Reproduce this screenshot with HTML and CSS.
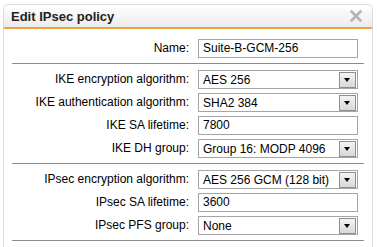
FILE: index.html
```html
<!DOCTYPE html>
<html lang="en">
  <head>
    <meta charset="UTF-8" />
    <title>Edit IPsec policy</title>
    <link rel="stylesheet" href="styles.css">
  </head>
  <body>
    <div class="dialog">
      <div class="header">
        <span class="title">Edit IPsec policy</span>
        <svg class="close" width="12" height="12" viewBox="0 0 12 12">
          <path d="M1.5 1.5 L10.5 10.5 M10.5 1.5 L1.5 10.5" stroke="#b4b4b4" stroke-width="2.6" stroke-linecap="round" />
        </svg>
      </div>

      <div class="body">
        <!-- name -->
        <div class="group">
          <label class="label">Name:</label>
          <div class="field">Suite-B-GCM-256</div>
        </div>

        <!-- IKE -->
        <div class="group">
          <label class="label">IKE encryption algorithm:</label>
          <div class="select"><span>AES 256</span><i class="btn"></i></div>

          <label class="label">IKE authentication algorithm:</label>
          <div class="select"><span>SHA2 384</span><i class="btn"></i></div>

          <label class="label">IKE SA lifetime:</label>
          <div class="field">7800</div>

          <label class="label">IKE DH group:</label>
          <div class="select"><span>Group 16: MODP 4096</span><i class="btn"></i></div>
        </div>

        <!-- IPsec -->
        <div class="group">
          <label class="label">IPsec encryption algorithm:</label>
          <div class="select"><span>AES 256 GCM (128 bit)</span><i class="btn"></i></div>

          <label class="label">IPsec SA lifetime:</label>
          <div class="field">3600</div>

          <label class="label">IPsec PFS group:</label>
          <div class="select"><span>None</span><i class="btn"></i></div>
        </div>
      </div>
    </div>
  </body>
</html>
```

FILE: styles.css
```css
body {
  margin: 0;
  background-color: #fff;
  font-family: "Liberation Sans", Arial, sans-serif;
  font-size: 12px;
  color: #000;
}
.dialog {
  margin: 4px 4px 0 3px;
  height: 243px;
  border: 1px solid #dcdcdc;
  border-bottom: none;
  border-radius: 5px 5px 0 0;
  background-color: #fff;
}
.header {
  height: 22px;
  display: flex;
  align-items: center;
  justify-content: space-between;
  padding: 0 10px 0 7px;
  background: linear-gradient(#ffffff, #ececec);
  border-bottom: 2px solid #f0a33c;
  border-radius: 5px 5px 0 0;
}
.title {
  font-size: 13px;
  font-weight: bold;
  color: #222;
}
.close {
  display: block;
}

.body {
  padding: 5px 8px 0 8px;
}
.group {
  display: grid;
  grid-template-columns: 177px 160px;
  column-gap: 9px;
  row-gap: 4px;
  padding: 5px 0 5px 0;
  border-bottom: 1px solid #8c8c8c;
}
.group + .group {
  padding-top: 6px;
}
.label {
  text-align: right;
  line-height: 19px;
}
.field {
  height: 17px;
  line-height: 17px;
  border: 1px solid #a5a5a5;
  padding-left: 4px;
  width: 154px;
}
.select {
  height: 17px;
  border: 1px solid #a5a5a5;
  display: flex;
  align-items: center;
  justify-content: space-between;
  padding-left: 4px;
}
.btn {
  width: 15px;
  height: 14px;
  margin-right: 1px;
  border: 1px solid #8e8e8e;
  background: linear-gradient(#f4f4f4, #d8d8d8);
  position: relative;
}
.btn::after {
  content: "";
  position: absolute;
  left: 4px;
  top: 5px;
  border-left: 3.5px solid transparent;
  border-right: 3.5px solid transparent;
  border-top: 4px solid #000;
}
```
